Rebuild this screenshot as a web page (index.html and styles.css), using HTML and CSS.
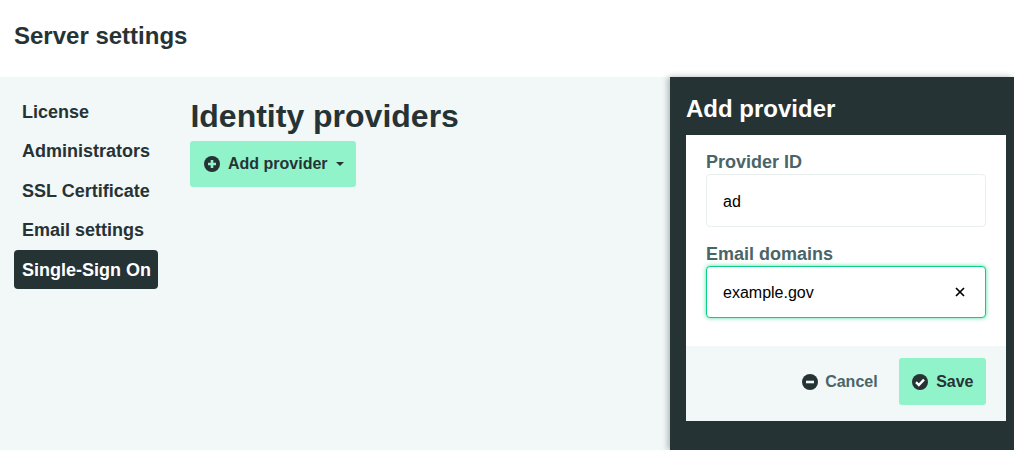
FILE: index.html
```html
<!DOCTYPE html>
<html lang="en">
<head>
  <meta charset="UTF-8">
  <title>Server settings</title>
  <link rel="stylesheet" href="styles.css">
</head>
<body>
  <header class="topbar">
    <h1>Server settings</h1>
  </header>
  <div class="layout">
    <nav class="sidenav">
      <a href="#">License</a>
      <a href="#">Administrators</a>
      <a href="#">SSL Certificate</a>
      <a href="#">Email settings</a>
      <a href="#" class="active">Single-Sign On</a>
    </nav>
    <main class="content">
      <h2>Identity providers</h2>
      <button class="btn btn-primary btn-add" type="button">
        <svg class="icon" viewBox="0 0 16 16"><circle cx="8" cy="8" r="8" fill="#263335"/><path d="M8 4v8M4 8h8" stroke="#91f3c9" stroke-width="2.6"/></svg>
        Add provider
        <span class="caret"></span>
      </button>
    </main>
    <aside class="panel">
      <h3>Add provider</h3>
      <form class="panel-card">
        <div class="panel-fields">
          <label for="provider-id">Provider ID</label>
          <input id="provider-id" type="text" value="ad">
          <label for="domains">Email domains</label>
          <div class="tag-input" id="domains">
            <span>example.gov</span>
            <svg class="remove" viewBox="0 0 10 10"><path d="M1 1l8 8M9 1l-8 8" stroke="#000" stroke-width="1.7"/></svg>
          </div>
        </div>
        <div class="panel-actions">
          <button class="btn btn-plain" type="button">
            <svg class="icon" viewBox="0 0 16 16"><circle cx="8" cy="8" r="8" fill="#263335"/><path d="M4 8h8" stroke="#f2f7f7" stroke-width="2.6"/></svg>
            Cancel
          </button>
          <button class="btn btn-primary btn-save" type="button">
            <svg class="icon" viewBox="0 0 16 16"><circle cx="8" cy="8" r="8" fill="#263335"/><path d="M4 8.2l2.8 2.8L12 5.6" fill="none" stroke="#fff" stroke-width="2.4"/></svg>
            Save
          </button>
        </div>
      </form>
    </aside>
  </div>
</body>
</html>
```

FILE: styles.css
```css
* {
  box-sizing: border-box;
}

body {
  margin: 0;
  height: 450px;
  overflow: hidden;
  font-family: "Liberation Sans", Arial, sans-serif;
  color: #263335;
  background: #fff;
}

.topbar {
  height: 77px;
  padding: 0 14px;
  display: flex;
  align-items: center;
}

.topbar h1 {
  margin: 0 0 5px;
  font-size: 24px;
  font-weight: 700;
}

.layout {
  display: flex;
  height: 373px;
  background: #f2f7f7;
}

.sidenav {
  width: 190.4px;
  padding: 15.4px 0 0 14px;
  flex-shrink: 0;
}

.sidenav a {
  display: block;
  width: 144px;
  height: 39.4px;
  line-height: 39.4px;
  padding: 0.65px 8px 0;
  border-radius: 4px;
  font-size: 18px;
  font-weight: 700;
  color: #263335;
  text-decoration: none;
  white-space: nowrap;
}

.sidenav a.active {
  background: #263335;
  color: #fff;
}

.content {
  flex: 1;
  padding-top: 19px;
}

.content h2 {
  margin: 0 0 5px;
  font-size: 32px;
  line-height: 40px;
  font-weight: 700;
}

.btn {
  display: inline-flex;
  align-items: center;
  height: 47px;
  padding: 0 13px;
  border: 0;
  border-radius: 3px;
  font-family: inherit;
  font-size: 16px;
  font-weight: 700;
  color: #263335;
  cursor: pointer;
}

.btn-primary {
  background: #91f3c9;
}

.btn-add {
  height: 46.4px;
  padding: 0 12px 0 13.6px;
}

.btn-plain {
  background: none;
  color: #4a6568;
}

.icon {
  width: 16px;
  height: 16px;
  margin-right: 8px;
}

.btn-plain .icon {
  margin-right: 7px;
}

.btn-save {
  padding: 0 12.5px 0 13px;
}

.btn-save .icon {
  margin-right: 8.5px;
}

.caret {
  margin-left: 8px;
  border: 4px solid transparent;
  border-top-color: #263335;
  border-bottom: 0;
}

.panel {
  width: 344px;
  padding: 0 8px 0 16px;
  flex-shrink: 0;
  background: #263335;
  box-shadow: -2px 0 6px rgba(38, 51, 53, 0.35);
}

.panel h3 {
  margin: 0;
  height: 58px;
  line-height: 64px;
  font-size: 24px;
  font-weight: 700;
  color: #fff;
}

.panel-card {
  background: #fff;
}

.panel-fields {
  height: 211px;
  padding: 16px 20px 0;
}

.panel-fields label {
  display: block;
  height: 23px;
  font-size: 18px;
  line-height: 23px;
  font-weight: 700;
  color: #4a6568;
}

.panel-fields input,
.tag-input {
  display: block;
  width: 100%;
  height: 53px;
  margin-bottom: 16px;
  padding: 2px 16px 0;
  border: 1px solid #e9eeee;
  border-radius: 4px;
  background: #fff;
  font-family: inherit;
  font-size: 16px;
  color: #000;
}

.tag-input {
  display: flex;
  align-items: center;
  justify-content: space-between;
  height: 52px;
  padding: 0 16px;
  border-color: #0ccf83;
  box-shadow: 0 0 4px rgba(12, 207, 131, 0.7);
}

.tag-input span {
  padding-top: 2px;
}

.remove {
  width: 10px;
  height: 10px;
  margin-right: 4px;
}

.panel-actions {
  height: 75px;
  padding: 12px 20px 0;
  display: flex;
  justify-content: flex-end;
  gap: 8px;
  background: #f2f7f7;
}
```
